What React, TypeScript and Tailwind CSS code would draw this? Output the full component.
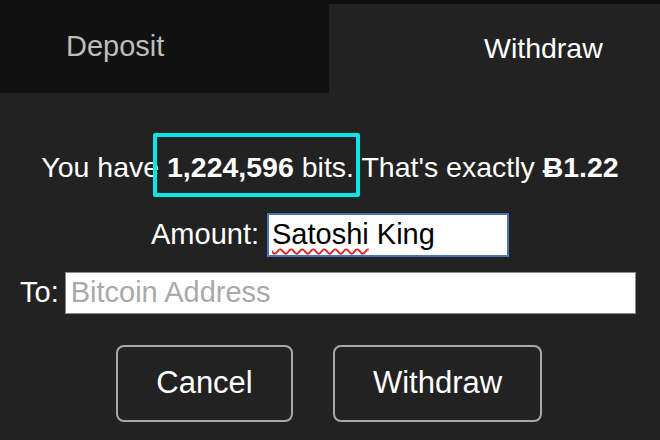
export default function App() {
	return (
		<div
			className="flex h-[440px] w-[660px] flex-col bg-[#222222] text-white"
			style={{ fontFamily: '"Liberation Sans", Arial, sans-serif' }}
		>
			{/* tab bar */}
			<div className="flex h-[93px] bg-[#0e0e0e]">
				<div className="flex w-[329px] items-center bg-[#111111] pl-[66px] text-[29px] text-[#bdbdbd]">
					Deposit
				</div>
				<div className="mt-[4px] flex flex-1 items-center bg-[#222222] pl-[155px] text-[28.5px] text-white">
					Withdraw
				</div>
			</div>

			{/* balance line */}
			<div className="mt-[57px] flex justify-center text-[28.5px] leading-[34px]">
				<span>
					You have{" "}
					<span className="relative">
						<span className="font-bold">1,224,596</span> bits.
						<span className="absolute -top-[18px] -bottom-[14px] -left-[14px] -right-[6px] rounded-[2px] border-4 border-[#08e6e8]" />
					</span>{" "}
					That's exactly <span className="font-bold">Ƀ1.22</span>
				</span>
			</div>

			{/* amount */}
			<div className="mt-[29px] flex items-center justify-center gap-[8px]">
				<span className="text-[29px]">Amount:</span>
				<div className="flex h-[44px] w-[242px] items-center border-2 border-[#4a74b8] bg-white px-[3px] text-[29px] text-black">
					<span className="underline decoration-[#e02020] decoration-wavy decoration-[1.5px] underline-offset-[4px]">
						Satoshi
					</span>
					<span>&nbsp;King</span>
				</div>
			</div>

			{/* to */}
			<div className="mt-[14px] flex items-center gap-[6px] pl-[20px]">
				<span className="text-[29px]">To:</span>
				<div className="flex h-[42px] w-[571px] items-center border border-[#8a8a8a] bg-white px-[5px] text-[29px] text-[#a9a9a9]">
					Bitcoin Address
				</div>
			</div>

			{/* buttons */}
			<div className="mt-[30px] flex gap-[40px] pl-[116px]">
				<button className="h-[77px] w-[177px] rounded-[8px] border-2 border-[#a8a8a8] bg-[#222222] text-[31px] text-white">
					Cancel
				</button>
				<button className="h-[77px] w-[209px] rounded-[8px] border-2 border-[#a8a8a8] bg-[#222222] text-[31px] text-white">
					Withdraw
				</button>
			</div>
		</div>
	);
}
